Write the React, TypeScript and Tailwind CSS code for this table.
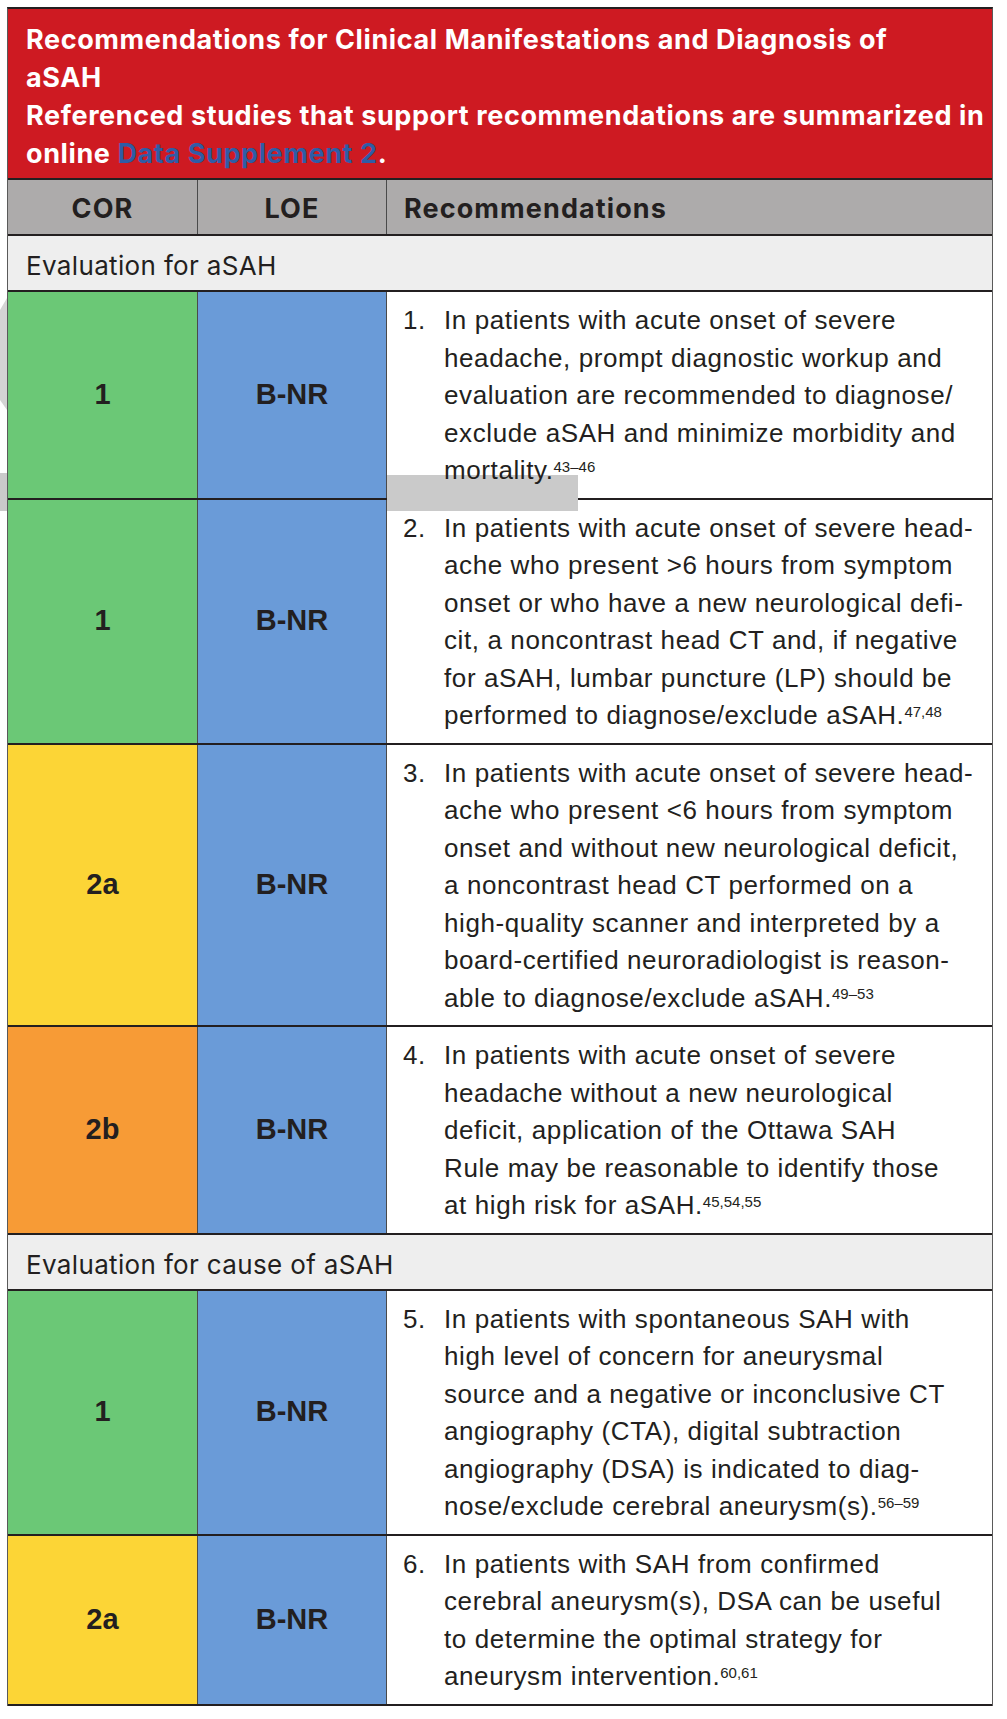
import React from "react";

type Row = {
  n: number;
  cor: string;
  corBg: string;
  lines: string[];
  sup: string;
};

const rowsA: Row[] = [
  {
    n: 1,
    cor: "1",
    corBg: "bg-[#6bc876]",
    lines: [
      "In patients with acute onset of severe",
      "headache, prompt diagnostic workup and",
      "evaluation are recommended to diagnose/",
      "exclude aSAH and minimize morbidity and",
      "mortality.",
    ],
    sup: "43–46",
  },
  {
    n: 2,
    cor: "1",
    corBg: "bg-[#6bc876]",
    lines: [
      "In patients with acute onset of severe head-",
      "ache who present >6 hours from symptom",
      "onset or who have a new neurological defi-",
      "cit, a noncontrast head CT and, if negative",
      "for aSAH, lumbar puncture (LP) should be",
      "performed to diagnose/exclude aSAH.",
    ],
    sup: "47,48",
  },
  {
    n: 3,
    cor: "2a",
    corBg: "bg-[#fcd536]",
    lines: [
      "In patients with acute onset of severe head-",
      "ache who present <6 hours from symptom",
      "onset and without new neurological deficit,",
      "a noncontrast head CT performed on a",
      "high-quality scanner and interpreted by a",
      "board-certified neuroradiologist is reason-",
      "able to diagnose/exclude aSAH.",
    ],
    sup: "49–53",
  },
  {
    n: 4,
    cor: "2b",
    corBg: "bg-[#f79b36]",
    lines: [
      "In patients with acute onset of severe",
      "headache without a new neurological",
      "deficit, application of the Ottawa SAH",
      "Rule may be reasonable to identify those",
      "at high risk for aSAH.",
    ],
    sup: "45,54,55",
  },
];

const rowsB: Row[] = [
  {
    n: 5,
    cor: "1",
    corBg: "bg-[#6bc876]",
    lines: [
      "In patients with spontaneous SAH with",
      "high level of concern for aneurysmal",
      "source and a negative or inconclusive CT",
      "angiography (CTA), digital subtraction",
      "angiography (DSA) is indicated to diag-",
      "nose/exclude cerebral aneurysm(s).",
    ],
    sup: "56–59",
  },
  {
    n: 6,
    cor: "2a",
    corBg: "bg-[#fcd536]",
    lines: [
      "In patients with SAH from confirmed",
      "cerebral aneurysm(s), DSA can be useful",
      "to determine the optimal strategy for",
      "aneurysm intervention.",
    ],
    sup: "60,61",
  },
];

function DataRow({ row }: { row: Row }) {
  return (
    <div className="flex border-b-2 border-[#231f20]">
      <div
        className={`w-[190px] shrink-0 border-r border-[#4a4a4a] ${row.corBg} flex items-center justify-center font-bold text-[29px] text-[#231f20] font-['Liberation_Sans',Arial,sans-serif]`}
      >
        {row.cor}
      </div>
      <div className="w-[189px] shrink-0 border-r border-[#4a4a4a] bg-[#6a9bd8] flex items-center justify-center font-bold text-[29px] text-[#231f20] font-['Liberation_Sans',Arial,sans-serif]">
        B-NR
      </div>
      <div className="flex-1 bg-white pl-[16px] pr-[10px] pt-[10px] pb-[8px] flex text-[26px] leading-[37.5px] tracking-[0.6px] text-[#231f20] font-['Liberation_Sans',Arial,sans-serif]">
        <div className="w-[41px] shrink-0 relative z-10">{row.n}.</div>
        <div className="whitespace-nowrap relative z-10">
          {row.lines.map((l, i) => (
            <div key={i}>
              {l}
              {i === row.lines.length - 1 && (
                <sup className="text-[15px] tracking-normal">{row.sup}</sup>
              )}
            </div>
          ))}
        </div>
      </div>
    </div>
  );
}

function Section({ label }: { label: string }) {
  return (
    <div className="h-[56px] border-b-2 border-[#231f20] bg-[#eeeeee] flex items-center pl-[18px] pt-[5px] text-[26px] tracking-[0.35px] text-[#231f20] font-['Inter',sans-serif]">
      {label}
    </div>
  );
}

export default function App() {
  return (
    <div className="w-[1007px] h-[1719px] bg-white pt-[7px] pl-[7px] relative overflow-hidden">
      <div className="w-[986px] border-x border-[#5a5a5a] border-t-2 border-t-[#231f20] relative">
        <div className="bg-[#ce1a22] pl-[18px] pt-[12px] pb-[5px] text-white font-bold text-[27px] tracking-[0.6px] leading-[38px] font-['Inter',sans-serif] whitespace-nowrap">
          <div>Recommendations for Clinical Manifestations and Diagnosis of</div>
          <div>aSAH</div>
          <div>Referenced studies that support recommendations are summarized in</div>
          <div>
            online <span className="text-[#2f5ca6]">Data Supplement 2</span>.
          </div>
        </div>
        <div className="flex h-[58px] border-y-2 border-[#231f20] bg-[#adabab] font-bold text-[27px] tracking-[1.1px] text-[#231f20] font-['Inter',sans-serif]">
          <div className="w-[190px] shrink-0 border-r border-[#4a4a4a] flex items-center justify-center pt-[5px]">
            COR
          </div>
          <div className="w-[189px] shrink-0 border-r border-[#4a4a4a] flex items-center justify-center pt-[5px]">
            LOE
          </div>
          <div className="flex-1 flex items-center pl-[17px] pt-[5px]">Recommendations</div>
        </div>
        <Section label="Evaluation for aSAH" />
        {rowsA.map((r) => (
          <DataRow key={r.n} row={r} />
        ))}
        <Section label="Evaluation for cause of aSAH" />
        {rowsB.map((r) => (
          <DataRow key={r.n} row={r} />
        ))}
        <div className="absolute left-[379px] top-[466px] w-[191px] h-[36px] bg-[#cacaca]" />
      </div>
      <svg className="absolute left-0 top-[290px]" width="7" height="230" viewBox="0 0 7 230">
        <polygon points="0,20 7,8 7,120 0,110" fill="#d4d4d4" />
        <rect x="0" y="183" width="7" height="38" fill="#cacaca" />
      </svg>
    </div>
  );
}
